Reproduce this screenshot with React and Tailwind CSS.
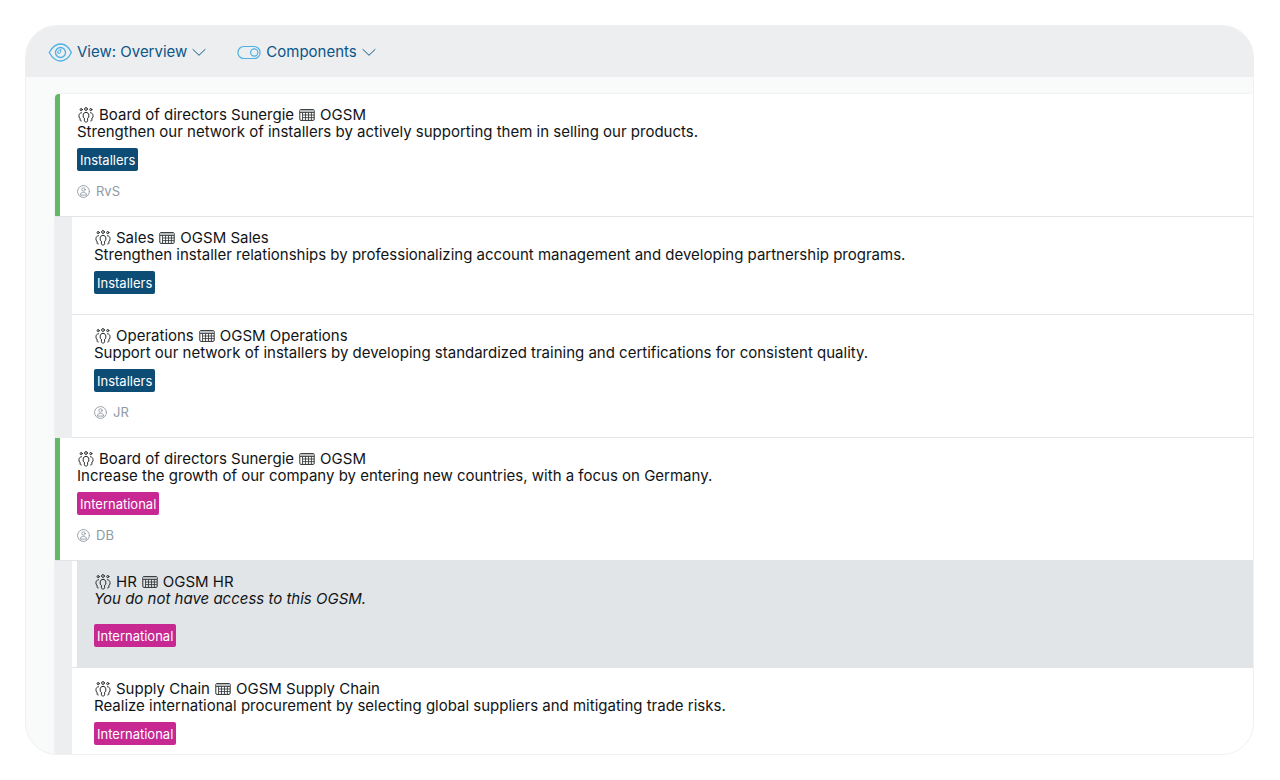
import React from "react";

function EyeIcon() {
  return (
    <svg viewBox="0 0 24 20" className="h-5 w-6 shrink-0" fill="none" stroke="#4eb0e4" strokeWidth="1.300" strokeLinecap="round" strokeLinejoin="round" aria-hidden="true">
      <path d="M1.200 10.500C4 5.500 7.800 2 12.500 2S21 5.500 23.400 10.500C21 15.500 17.200 19 12.500 19S4 15.500 1.200 10.500Z" />
      <circle cx="12.500" cy="10.500" r="5" />
      <path d="M12.700 7.800V9.800C12.700 11 11.500 11.900 9.900 11.300C9.300 9.500 10.500 7.800 12.700 7.800Z" strokeWidth="1" />
    </svg>
  );
}

function ToggleIcon() {
  return (
    <svg viewBox="0 0 24 14" className="h-[14px] w-6 shrink-0" fill="none" stroke="#4eb0e4" strokeWidth="1.200" aria-hidden="true">
      <rect x="0.900" y="1.500" width="22.200" height="12" rx="6" />
      <circle cx="17.200" cy="7.500" r="3.600" />
    </svg>
  );
}

function ChevronIcon() {
  return (
    <svg viewBox="0 0 14 8" className="h-2 w-[14px] shrink-0" fill="none" stroke="#0a5688" strokeWidth="1" strokeLinecap="round" strokeLinejoin="round" aria-hidden="true">
      <path d="M1 1.500L7 7.300L13 1.500" />
    </svg>
  );
}

function TeamIcon() {
  return (
    <svg viewBox="0 0 16 16" className="h-4 w-4 shrink-0" fill="none" stroke="#2a2d2f" strokeWidth="1" strokeLinecap="round" strokeLinejoin="round" aria-hidden="true">
      <circle cx="8" cy="2" r="1.400" />
      <circle cx="3.200" cy="2.600" r="1.100" />
      <circle cx="12.800" cy="2.600" r="1.100" />
      <path d="M8 5.400C6.200 5.400 5.200 6.500 5.200 8V10.200L6.400 11.200V13.800C6.400 14.600 7 15 8 15S9.600 14.600 9.600 13.800V11.200L10.800 10.200V8C10.800 6.500 9.800 5.400 8 5.400Z" />
      <path d="M3.500 5.700C1.800 6 1 7 1 8.500V10.300L2.100 11.200V13C2.100 13.600 2.500 14 3.300 14" />
      <path d="M12.500 5.700C14.200 6 15 7 15 8.500V10.300L13.900 11.200V13C13.900 13.600 13.500 14 12.700 14" />
    </svg>
  );
}

function TableIcon() {
  return (
    <svg viewBox="0 0 16 12" className="h-3 w-4 shrink-0" fill="none" stroke="#2a2d2f" strokeWidth="1" aria-hidden="true">
      <rect x="0.800" y="0.600" width="14.400" height="10.800" rx="1.200" />
      <path d="M1.200 1.100H14.800V3.300H1.200Z" fill="#b9bcbe" stroke="none" />
      <path d="M1 3.500H15M3.500 6H15M3.500 8.600H15M3.500 3.500V11.300M6.500 3.500V11.300M9.500 3.500V11.300M12.400 3.500V11.300" strokeWidth="0.800" />
    </svg>
  );
}

function PersonIcon() {
  return (
    <svg viewBox="0 0 13 13" className="h-[13px] w-[13px] shrink-0" fill="none" stroke="#8e9ba5" strokeWidth="0.900" strokeLinecap="round" strokeLinejoin="round" aria-hidden="true">
      <circle cx="6.500" cy="6.500" r="5.950" />
      <circle cx="6.500" cy="4.500" r="1.700" />
      <path d="M3.300 9.700C3.300 8.200 4.700 7.400 6.500 7.400S9.700 8.200 9.700 9.700Z" />
    </svg>
  );
}

const tagColors = {
  Installers: "bg-[#0d4c75]",
  International: "bg-[#c72892]",
};

const goals = [
  {
    team: "Board of directors Sunergie",
    plan: "OGSM",
    text: "Strengthen our network of installers by actively supporting them in selling our products.",
    tag: "Installers",
    owner: "RvS",
    children: [
      {
        team: "Sales",
        plan: "OGSM Sales",
        text: "Strengthen installer relationships by professionalizing account management and developing partnership programs.",
        tag: "Installers",
      },
      {
        team: "Operations",
        plan: "OGSM Operations",
        text: "Support our network of installers by developing standardized training and certifications for consistent quality.",
        tag: "Installers",
        owner: "JR",
      },
    ],
  },
  {
    team: "Board of directors Sunergie",
    plan: "OGSM",
    text: "Increase the growth of our company by entering new countries, with a focus on Germany.",
    tag: "International",
    owner: "DB",
    children: [
      {
        team: "HR",
        plan: "OGSM HR",
        text: "You do not have access to this OGSM.",
        tag: "International",
        locked: true,
      },
      {
        team: "Supply Chain",
        plan: "OGSM Supply Chain",
        text: "Realize international procurement by selecting global suppliers and mitigating trade risks.",
        tag: "International",
      },
    ],
  },
];

function Entry({ goal }) {
  return (
    <>
      <h2 className="flex items-center gap-[5px] pl-px">
        <TeamIcon />
        <span>{goal.team}</span>
        <TableIcon />
        <span>{goal.plan}</span>
      </h2>
      <p className={goal.locked ? "italic" : ""}>{goal.text}</p>
      <div className={goal.locked ? "mt-[17px] flex" : "mt-2 flex"}>
        <span className={`rounded-[2px] px-[3px] pt-px text-[13px] leading-[22px] text-white ${tagColors[goal.tag]}`}>
          {goal.tag}
        </span>
      </div>
      {goal.owner && (
        <div className="mt-3 flex items-center gap-[6px] text-[13px] text-[#8e9ba5]">
          <PersonIcon />
          <span>{goal.owner}</span>
        </div>
      )}
    </>
  );
}

function SubGoal({ goal }) {
  const bottom = goal.owner ? "pb-4" : "pb-5";
  const tone = goal.locked ? "ml-[5px] bg-[#e1e5e8] pl-[17px]" : "pl-[22px]";
  return (
    <li className="border-b border-[#e1e5e8] bg-white">
      <article className={`pt-3 pr-4 ${bottom} ${tone}`}>
        <Entry goal={goal} />
      </article>
    </li>
  );
}

function Menu({ icon, label }) {
  return (
    <button type="button" className="flex items-center gap-[5px] text-[15px] text-[#0a5688]">
      {icon}
      <span>{label}</span>
      <ChevronIcon />
    </button>
  );
}

export default function App() {
  return (
    <div className="flex h-screen flex-col bg-white py-[25px] pr-[26px] pl-[25px] font-['Inter','Liberation_Sans',sans-serif] text-[15px] leading-[17px] text-[#111416]">
      <div className="flex min-h-0 flex-1 flex-col overflow-hidden rounded-[32px] border border-[#eff0f1] bg-[#f9fbfb]">
        <header className="flex h-[51px] shrink-0 items-center gap-[31px] bg-[#edeef0] px-[22px]">
          <Menu icon={<EyeIcon />} label="View: Overview" />
          <Menu icon={<ToggleIcon />} label="Components" />
        </header>
        <main className="min-h-0 flex-1 overflow-hidden pt-[17px] pl-[29px]">
          <div className="overflow-hidden rounded-tl-[4px] shadow-[0_0_3px_rgba(0,0,0,0.08)]">
            {goals.map((goal) => (
              <section key={goal.text}>
                <article className="border-b border-[#e1e5e8] bg-white">
                  <div className="border-l-[5px] border-[#61b865] pt-3 pr-4 pb-4 pl-[17px]">
                    <Entry goal={goal} />
                  </div>
                </article>
                <ul className="bg-[#edeef0] pl-[17px]">
                  {goal.children.map((child) => (
                    <SubGoal key={child.text} goal={child} />
                  ))}
                </ul>
              </section>
            ))}
          </div>
        </main>
      </div>
    </div>
  );
}
